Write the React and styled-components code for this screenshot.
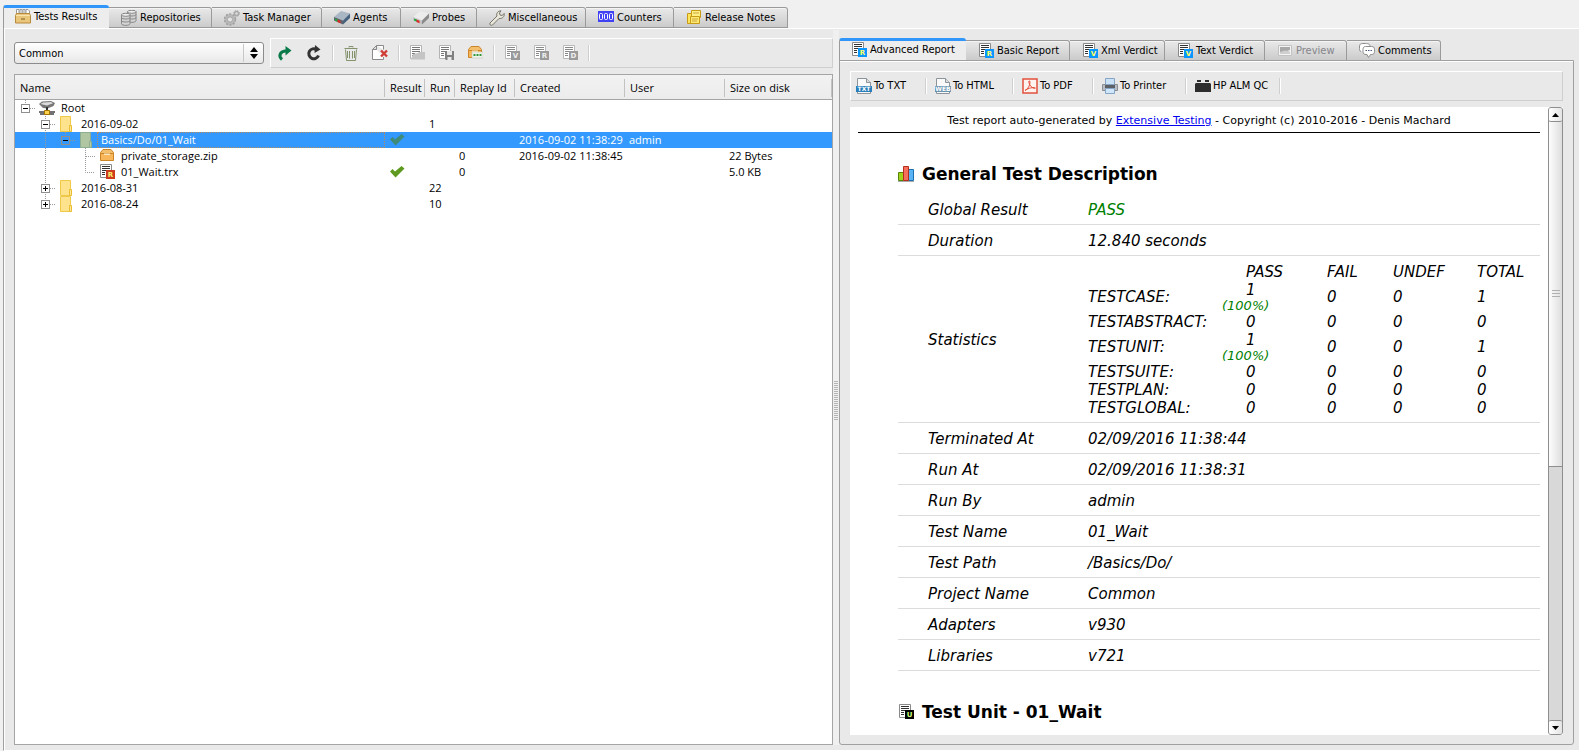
import React from "react";
import styled, { createGlobalStyle, css } from "styled-components";

const uiFont = '"DejaVu Sans Condensed", "DejaVu Sans", sans-serif';
const treeFont = '"Open Sans", "Noto Sans", sans-serif';
const reportFont = '"DejaVu Sans", sans-serif';

const GlobalStyle = createGlobalStyle`
  *, *::before, *::after { box-sizing: border-box; }
  body { margin: 0; background: #f0f0f0; color: #000; font: 11px/16px ${uiFont}; }
  button, select { font: inherit; color: inherit; }
`;

/* ---------- shell ---------- */
const Window = styled.div`
  display: flex;
  flex-direction: column;
  height: 100vh;
  min-height: 480px;
  padding: 5px 0 0 3px;
  overflow: hidden;
  background: #f0f0f0;
`;
const TabList = styled.div`
  display: flex;
  align-items: flex-end;
  height: 23px;
  flex: none;
`;
const Tab = styled.button`
  display: flex;
  align-items: center;
  gap: 3px;
  width: ${(p) => p.$width}px;
  height: 21px;
  flex: none;
  padding: 0 0 0 12px;
  border: 1px solid #9a9a9a;
  border-left-width: 0;
  border-radius: 0 3px 0 0;
  background: linear-gradient(#e9e9e9, #cbcbcb);
  box-shadow: inset 0 1px #f4f4f4;
  white-space: nowrap;
  text-align: left;
  &:disabled { color: #85858b; }
  ${(p) => p.$active && css`
    height: 23px;
    padding-left: 11px;
    padding-bottom: 2px;
    border: 1px solid #9a9a9a;
    border-width: 3px 0 0 1px;
    border-top-color: #3096fa;
    border-radius: 3px 3px 0 0;
    background: #ededed;
    box-shadow: none;
  `}
`;
const Pane = styled.div`
  display: flex;
  flex: 1;
  min-height: 0;
  min-width: 0;
  background: #e9e9e9;
`;
const OuterPane = styled(Pane)`
  border-left: 1px solid #a0a0a0;
  border-bottom: 1px solid #fff;
  box-shadow: inset 1px 1px #fff;
  padding: 10px 5px 5px 10px;
`;
const Left = styled.section`
  display: flex;
  flex-direction: column;
  flex: 819 1 0;
  min-width: 0;
`;
const Right = styled.section`
  display: flex;
  flex-direction: column;
  flex: 735 1 0;
  min-width: 0;
`;
const Splitter = styled.div`
  display: flex;
  align-items: center;
  justify-content: center;
  width: 6px;
  margin-top: -8px;
  padding-top: 26px;
  flex: none;
  background: #f0f0f0;
`;

/* ---------- left side ---------- */
const LeftBar = styled.div`
  display: flex;
  align-items: center;
  gap: 6px;
  height: 30px;
  flex: none;
`;
const Combo = styled.div`
  position: relative;
  width: 250px;
  height: 22px;
  flex: none;
`;
const Select = styled.select`
  appearance: none;
  width: 100%;
  height: 100%;
  padding: 1px 24px 0 4px;
  border: 1px solid #8c8c8c;
  border-radius: 3px;
  background: linear-gradient(#fff, #e8e8e8);
`;
const ComboArrows = styled.span`
  position: absolute;
  right: 1px;
  top: 2px;
  bottom: 2px;
  width: 20px;
  display: flex;
  align-items: center;
  justify-content: center;
  border-left: 1px solid #c8c8c8;
  pointer-events: none;
`;
const ToolBar = styled.div`
  display: flex;
  align-items: center;
  height: 30px;
  flex: 1;
  min-width: 0;
  border: 1px solid #fff;
  border-bottom-color: #cfcfcf;
  border-right-color: #cfcfcf;
`;
const ReportToolBar = styled(ToolBar)`
  flex: none;
`;
const IconButton = styled.button`
  display: flex;
  align-items: center;
  justify-content: center;
  width: 29px;
  height: 24px;
  padding: 0 2px 0 0;
  border: 0;
  background: none;
`;
const Separator = styled.span`
  width: 2px;
  height: 16px;
  margin: 0 3px;
  flex: none;
  border-left: 1px solid #cfcfcf;
  border-right: 1px solid #fff;
`;
const TreeBox = styled.div`
  flex: 1;
  min-height: 0;
  margin-top: 6px;
  overflow: hidden;
  border: 1px solid #a5a5a5;
  background: #fff;
`;
const Tree = styled.table`
  width: 100%;
  table-layout: fixed;
  border-collapse: separate;
  border-spacing: 0;
  font: 11px/16px ${treeFont};
`;
const TreeHead = styled.th`
  position: relative;
  height: 25px;
  padding: 1px 0 0 5px;
  border-bottom: 1px solid #a5a5a5;
  background: linear-gradient(to bottom, #f2f2f2, #ececec);
  font-weight: 400;
  text-align: left;
  white-space: nowrap;
  &::after {
    content: "";
    position: absolute;
    right: 0;
    top: 4px;
    bottom: 2px;
    width: 1px;
    background: #c2c2c2;
  }
`;
const TreeRow = styled.tr`
  height: 16px;
  ${(p) => p.$selected && css`background: #3399ff; color: #fff;`}
`;
const TreeCell = styled.td`
  height: 16px;
  padding: 0 0 0 4px;
  white-space: nowrap;
  overflow: hidden;
`;
const NameCell = styled(TreeCell)`
  padding: 0;
`;
const NameLine = styled.div`
  display: flex;
  height: 16px;
`;
const RowIcon = styled.span`
  flex: none;
  margin: 0 2px 0 4px;
`;
const NameText = styled.span`
  flex: 1;
  padding-left: ${(p) => (p.$focus ? 3 : 4)}px;
  line-height: ${(p) => (p.$focus ? 14 : 16)}px;
  ${(p) => p.$focus && css`border: 1px dotted #b98a5c;`}
`;
const Svg = styled.svg`
  display: block;
  flex: none;
`;

/* ---------- right side ---------- */
const RightPane = styled(Pane)`
  flex-direction: column;
  gap: 6px;
  padding: 10px 10px 9px;
  border: 1px solid #a0a0a0;
  border-radius: 0 0 3px 3px;
  box-shadow: inset 0 1px #fff;
`;
const RightTabs = styled(TabList)`
  margin-bottom: -1px;
`;
const TextButton = styled.button`
  display: flex;
  align-items: center;
  gap: 2px;
  width: ${(p) => p.$width}px;
  height: 24px;
  padding: 0 0 0 5px;
  border: 0;
  background: none;
  white-space: nowrap;
`;
const View = styled.div`
  display: flex;
  flex: 1;
  min-height: 0;
  background: #fff;
`;
const Doc = styled.article`
  flex: 1;
  min-width: 0;
  overflow: hidden;
  padding: 5px 8px 0;
  font: 15px/18px ${reportFont};
`;
const Credits = styled.p`
  margin: 0;
  padding-bottom: 2px;
  border-bottom: 1px solid #000;
  font-size: 11px;
  line-height: 18px;
  text-align: center;
  white-space: nowrap;
  a { color: #0000ee; }
`;
const Heading = styled.h2`
  display: flex;
  align-items: center;
  gap: 8px;
  margin: 29px 0 8px 40px;
  font-size: 17px;
  line-height: 24px;
`;
const Facts = styled.table`
  width: calc(100% - 40px);
  margin-left: 40px;
  border-collapse: separate;
  border-spacing: 0;
  table-layout: fixed;
  font-style: italic;
`;
const FactLabel = styled.th`
  width: 190px;
  padding: 7px 0 5px 30px;
  border-bottom: 1px solid #dcdcdc;
  font-weight: 400;
  text-align: left;
`;
const FactValue = styled.td`
  padding: 7px 0 5px;
  border-bottom: 1px solid #dcdcdc;
  color: ${(p) => (p.$pass ? "#008000" : "#000")};
`;
const Stats = styled.table`
  width: 100%;
  table-layout: fixed;
  border-collapse: separate;
  border-spacing: 0;
  th, td { padding: 0; font-weight: 400; text-align: left; white-space: nowrap; }
`;
const Count = styled.div`
  padding-left: 24px;
`;
const Percent = styled.div`
  color: #008000;
  font-size: 13px;
  line-height: 14px;
`;
const ScrollBar = styled.div`
  display: flex;
  flex-direction: column;
  width: 15px;
  flex: none;
  border: 1px solid #8e8e8e;
  border-radius: 3px;
  background: #d8d8d8;
`;
const ScrollButton = styled.button`
  display: flex;
  align-items: center;
  justify-content: center;
  height: 14px;
  flex: none;
  padding: 0;
  border: 0 solid #8e8e8e;
  border-width: ${(p) => (p.$up ? "0 0 1px" : "1px 0 0")};
  border-radius: 2px;
  background: linear-gradient(to right, #fff, #e4e4e4);
`;
const Thumb = styled.div`
  display: flex;
  align-items: center;
  justify-content: center;
  flex: 345 1 0;
  border-bottom: 1px solid #8e8e8e;
  background: linear-gradient(to right, #fcfcfc, #dedede);
`;
const Trough = styled.div`
  flex: 254 1 0;
`;

/* ---------- icons ---------- */
const Icon = ({ children }) => (
  <Svg width="16" height="16" viewBox="0 0 16 16" aria-hidden="true">{children}</Svg>
);
const Mark = ({ x, y, size = 7, fill, children }) => (
  <text x={x} y={y} fontSize={size} fill={fill} textAnchor="middle" fontWeight="700" fontStyle="normal" fontFamily="DejaVu Sans">{children}</text>
);
const Page = ({ children, line = "#333", edge = "#8a8a8a" }) => (
  <Icon>
    <path d="M1.500 .5h11v13h-11z" fill="#fff" stroke={edge} />
    <path d="M3 2.500h8M3 4.500h8M3 6.500h8M3 8.500h3M3 10.500h3" stroke={line} />
    {children}
  </Icon>
);
const BadgePage = ({ letter, fill = "#0a96ff", color = "#ffff66", line, edge }) => (
  <Page line={line} edge={edge}>
    <rect x="7" y="6" width="9" height="9" fill={fill} />
    <Mark x="11.500" y="13" fill={color}>{letter}</Mark>
  </Page>
);
const Drawer = () => (
  <Icon>
    <path d="M1.500 5V.5h2.500V5M5 5V.5h2V5M8 5V.5h2V5M11 5V.5h2l1.500 1.500v3" fill="#fff" stroke="#9a9a9a" />
    <path d="M1.500 4.500h13l1 2v7.500H.5V6.500z" fill="#eac67a" stroke="#b88a3c" />
    <path d="M1 6.500h14" stroke="#f8e4b0" />
    <path d="M6 10h4" stroke="#7a5a22" />
  </Icon>
);
const Databases = () => (
  <Icon>
    {[[6, 0], [0, 3]].map(([x, y]) => (
      <g key={x} fill="#d4d4d4" stroke="#858585" transform={`translate(${x} ${y})`}>
        <path d="M.5 1.500v9c0 2.500 8.500 2.500 8.500 0v-9z" />
        <path d="M.5 4.500c0 2 8.500 2 8.500 0M.5 7.500c0 2 8.500 2 8.500 0" fill="none" />
        <ellipse cx="4.800" cy="1.800" rx="4.300" ry="1.500" fill="#efefef" />
      </g>
    ))}
  </Icon>
);
const Gears = () => (
  <Icon>
    <circle cx="6" cy="9.500" r="4" fill="none" stroke="#b8b8b8" strokeWidth="3" />
    <circle cx="6" cy="9.500" r="5.500" fill="none" stroke="#a0a0a0" strokeWidth="1.500" strokeDasharray="2 1.500" />
    <circle cx="12.500" cy="3.500" r="2" fill="none" stroke="#a8a8a8" strokeWidth="1.500" />
    <circle cx="12.500" cy="3.500" r="3" fill="none" stroke="#a8a8a8" strokeDasharray="1.200 1.200" />
    <circle cx="6" cy="9.500" r="2.500" fill="#e4e4e4" stroke="#8f8f8f" strokeWidth=".6" />
  </Icon>
);
const Box = ({ top, side, front }) => (
  <Icon>
    <path d="M0 7l7-6 9 2.500-7 7z" fill={top} />
    <path d="M9 10.500l7-7V8l-7 6.500z" fill={side} />
    <path d="M0 7l9 3.500v4L0 10.500z" fill={front} />
    <path d="M1 8.500l3 1.200v2L1 10.500z" fill="#1faa3c" />
    <path d="M3.500 9.500l3 1.200v2.500l-3-1.200z" fill="#e02828" />
  </Icon>
);
const Wrench = () => (
  <Icon>
    <path d="M1 13l7-7c-1-3 1-5 4-5.200L10.500 3l.5 2 2 .5L15.300 3.500c.3 3-2 5.500-5.300 5L3.500 15c-1.500 1-3.500-.5-2.500-2z" fill="#e9e7dc" stroke="#77756c" />
  </Icon>
);
const Digits = () => (
  <Icon>
    <rect y="1" width="16" height="11" fill="#4040f4" />
    {[1.5, 6.5, 11.5].map((x) => <rect key={x} x={x} y="3.500" width="3" height="6" rx="1" fill="none" stroke="#fff" />)}
  </Icon>
);
const Notes = () => (
  <Icon>
    <path d="M1.500 3.500h9v10h-9z" fill="#ffe45c" stroke="#c79b14" />
    <path d="M5.500.5h9v7h-9z" fill="#ffef86" stroke="#c79b14" />
    <path d="M4.500 6.500h9v7h-9z" fill="#ffe972" stroke="#c79b14" />
    <path d="M7 3h6M6 9h6M6 11h5" stroke="#c9a63c" />
  </Icon>
);
const Replay = () => (
  <Icon>
    <path d="M5 14.500C1 11 3 5.500 10 6" fill="none" stroke="#0b7a4a" strokeWidth="3" />
    <path d="M8.500 1l6 4.500-6 5z" fill="#0b7a4a" />
  </Icon>
);
const Reload = () => (
  <Icon>
    <path d="M12.500 10.500A5 5 0 1 1 10.500 4.500" fill="none" stroke="#333" strokeWidth="3" />
    <path d="M9 0l5.500 4.500L8.500 8z" fill="#333" />
  </Icon>
);
const Trash = () => (
  <Icon>
    <path d="M6 2.500v-1h4v1M2.500 4.500l1 11h9l1-11M1.500 3.500h13M6.500 6v7.500M9.500 6v7.500M4.500 6v7M11.500 6v7" fill="none" stroke="#83926c" />
  </Icon>
);
const DeletePage = () => (
  <Icon>
    <path d="M4.500.5h7v4M11.500 12v2.500h-11v-10h4" fill="#fff" stroke="#8a8a8a" />
    <path d="M.5 4.500l4-4v4z" fill="#ddd" stroke="#8a8a8a" />
    <path d="M9 5.500l6 6M15 5.500l-6 6" stroke="#d03b34" strokeWidth="2.400" />
  </Icon>
);
const OpenPage = () => (
  <Page line="#777" edge="#b4b4b4">
    <path d="M4 9l5-1 1-1h6v7.500H2z" fill="#c4c4c4" />
  </Page>
);
const SavePage = () => (
  <Page line="#777" edge="#b4b4b4">
    <path d="M7 6h9v9H8l-1-1z" fill="#808080" />
    <path d="M9 6h5v4H9zM9.500 12h4v3h-4z" fill="#e8e8e8" />
  </Page>
);
const Chest = ({ extra }) => (
  <Icon>
    <path d="M1.500 6.500v-2l2.500-3h8l2.500 3v2z" fill="#f4bf6c" stroke="#cc8526" />
    <path d="M1.500 5.500h13v7h-13z" fill="#f8b75a" stroke="#cc8526" />
    <path d="M5 5.500h6v1.500H5z" fill="#fbe6bd" />
    {extra && <g><rect x="5" y="7" width="11" height="6" fill="#eef4ea" stroke="#bbb" strokeWidth=".5" /><path d="M6.500 10h2M9.500 10h2M12.500 10h2" stroke="#32943c" strokeWidth="2" /></g>}
  </Icon>
);
const FileType = ({ label, blue }) => (
  <Icon>
    <path d="M1.500 15.500V.5h9l4 4v11z" fill="#fafafa" stroke="#8c9399" />
    <path d="M10.500.5v4h4" fill="#ddd" stroke="#8c9399" />
    <rect y="8" width="16" height="6" fill={blue} />
    <Mark x="8" y="13.200" size={6} fill="#fff">{label}</Mark>
  </Icon>
);
const Pdf = () => (
  <Icon>
    <rect x="1" y="1" width="14" height="14" fill="#fff3f0" stroke="#e2503c" strokeWidth="1.500" />
    <path d="M3 12.500c3-1.500 5-5 5-8.500 0-1.500-1.500-1.500-1.200 0 .6 3.500 3 6 6 6.500.8 0 .6-1-.3-1C9 9.500 5.500 10.500 3 12.500z" fill="none" stroke="#e2503c" />
  </Icon>
);
const Printer = () => (
  <Icon>
    <path d="M3.500.5h9v6h-9z" fill="#c9e2f8" stroke="#86a5c4" />
    <path d="M.5 6.500h3v1h9v-1h3v6H.5z" fill="#b9bec4" stroke="#8a8f95" />
    <path d="M3 7h10v3H3z" fill="#5c6167" />
    <path d="M3.500 10.500h9v5h-9z" fill="#cfe6fb" stroke="#86a5c4" />
  </Icon>
);
const Brick = () => (
  <Icon><path d="M1 5h14l1 1v8H0V6zM2 2h4v2H2zM10 2h4v2h-4z" fill="#2d2d2d" /></Icon>
);
const Picture = () => (
  <Icon>
    <path d="M1.500 2.500h13v10h-13z" fill="#f4f4f4" stroke="#c2c2c2" />
    <path d="M3 4h10v3l-6 2H3z" fill="#a8a8a8" />
    <path d="M3 9l5-1.500 5 1V11H3z" fill="#cfcfcf" />
  </Icon>
);
const Bubbles = () => (
  <Icon>
    <path d="M2 8.500C0 8 .5 6 .5 4 .5 1 1.500.5 5 .5s6 0 6 3" fill="#fff" stroke="#8c8c8c" />
    <path d="M6.500 3.500h6c2 0 3 1 3 3v2c0 2-1 3-3 3h-1l-2 3-1.500-3H7c-2 0-3-1-3-3v-2c0-2 1-3 2.500-3z" fill="#fff" stroke="#8c8c8c" />
    <path d="M6.500 7.500h1.500M9 7.500h1.500M11.500 7.500h1.500" stroke="#46597c" />
  </Icon>
);
const RootIcon = () => (
  <Icon>
    <path d="M0 4l3-2.500L12 1l4 2-1.500 3-6 2.500L4 8z" fill="#777" />
    <path d="M1.500 4L4 2.500l8-.5 2 1.200L8 5.500z" fill="#ddd" />
    <path d="M8 7v4" stroke="#333" strokeWidth="2" />
    <path d="M0 12h16M1 14h14" stroke="#444" strokeWidth="1.500" />
    <path d="M5.500 10.500h5v4h-5z" fill="#ffd34a" stroke="#a87400" />
  </Icon>
);
const Folder = ({ selected }) => (
  <Icon>
    <path d="M1.500.5h10v15h-10z" fill={selected ? "#b0c5a2" : "#ffe38c"} stroke={selected ? "#8eae91" : "#efc94c"} />
    <path d="M10.500 9.500h2v6h-2z" fill={selected ? "#b6cba0" : "#ffe79c"} stroke={selected ? "#8eae91" : "#e9bd32"} />
  </Icon>
);
const Check = ({ selected }) => (
  <Icon><path d="M1 7.500L3.500 5 6 7.500 12.500 2 15.500 4.500 6.500 13.500z" fill={selected ? "#3f8a78" : "#5f9a20"} /></Icon>
);
const Bars = () => (
  <Icon>
    <path d="M.5 6.500h5v8h-5z" fill="#a2d21c" stroke="#55860c" />
    <path d="M10.500 3.500h5v11h-5z" fill="#58b4f4" stroke="#1c70b0" />
    <path d="M5.500.5h5v14h-5z" fill="#f4705c" stroke="#b42c1c" />
    <path d="M0 15.500h16" stroke="#aaa" />
  </Icon>
);
const Branch = ({ d, box }) => (
  <Svg width="20" height="16" viewBox="0 0 20 16" aria-hidden="true">
    {d && <path d={d} fill="none" stroke="#999" strokeDasharray="1 1" />}
    {box && <g><rect x="6.500" y="4.500" width="8" height="8" fill={box === "sel" ? "none" : "#fff"} stroke="#8f8f8f" /><path d={box === "+" ? "M8 8.500h5M10.500 6v5" : "M8 8.500h5"} stroke="#000" /></g>}
  </Svg>
);

/* ---------- content ---------- */
const mainTabs = [
  ["Tests Results", 106, <Drawer />], ["Repositories", 103, <Databases />], ["Task Manager", 110, <Gears />],
  ["Agents", 79, <Box top="#a9b6c4" side="#47627e" front="#5d646c" />], ["Probes", 76, <Box top="#ececec" side="#8a8a8a" front="#c4c4c4" />],
  ["Miscellaneous", 109, <Wrench />], ["Counters", 88, <Digits />], ["Release Notes", 114, <Notes />],
];
const reportTabs = [
  ["Advanced Report", 127, <BadgePage letter="R" />], ["Basic Report", 104, <BadgePage letter="R" />],
  ["Xml Verdict", 95, <BadgePage letter="V" />], ["Text Verdict", 100, <BadgePage letter="V" />],
  ["Preview", 82, <Picture />, true], ["Comments", 94, <Bubbles />],
];
const gray = { line: "#888", edge: "#b8b8b8", fill: "#9a9a9a", color: "#eee" };
const tools = [
  ["Replay", <Replay />], ["Refresh", <Reload />], null, ["Empty", <Trash />], ["Delete", <DeletePage />], null,
  ["Open", <OpenPage />], ["Save", <SavePage />], ["Export", <Chest extra />], null,
  ["Verdict", <BadgePage letter="V" {...gray} />], ["Report", <BadgePage letter="R" {...gray} />], ["Design", <BadgePage letter="D" {...gray} />], null,
];
const exportsTo = [
  ["To TXT", 71, <FileType label="TXT" blue="#2a7fba" />], ["To HTML", 79, <FileType label="WEB" blue="#6a93b0" />],
  ["To PDF", 72, <Pdf />], ["To Printer", 85, <Printer />], ["HP ALM QC", 86, <Brick />],
];
const columns = [["Name", 370], ["Result", 40], ["Run", 30], ["Replay Id", 60], ["Created", 110], ["User", 100], ["Size on disk", 0]];
const V = "M10.500 0v16";
const VH = "M10.500 0v16M15 8.500h5";
const rows = [
  { name: "Root", lines: [{ box: "-", d: "M10.500 0v4M15 8.500h5" }], icon: <RootIcon /> },
  { name: "2016-09-02", lines: [{}, { box: "-", d: VH }], icon: <Folder />, run: "1" },
  { name: "Basics/Do/01_Wait", lines: [{}, { d: V }, { box: "sel", d: "M10.500 0v4M15 8.500h5" }], icon: <Folder selected />, pass: true, selected: true, created: "2016-09-02 11:38:29", user: "admin" },
  { name: "private_storage.zip", lines: [{}, { d: V }, {}, { d: "M10.500 0v16M11 8.500h9" }], icon: <Chest />, replay: "0", created: "2016-09-02 11:38:45", size: "22 Bytes" },
  { name: "01_Wait.trx", lines: [{}, { d: V }, {}, { d: "M10.500 0v8.500h9" }], icon: <BadgePage letter="R" fill="#cc3c1c" color="#f8f46c" />, pass: true, replay: "0", size: "5.0 KB" },
  { name: "2016-08-31", lines: [{}, { box: "+", d: VH }], icon: <Folder />, run: "22" },
  { name: "2016-08-24", lines: [{}, { box: "+", d: "M10.500 0v8M15 8.500h5" }], icon: <Folder />, run: "10" },
];
const stats = [
  ["TESTCASE:", 1, 1], ["TESTABSTRACT:", 0, 0], ["TESTUNIT:", 1, 1], ["TESTSUITE:", 0, 0], ["TESTPLAN:", 0, 0], ["TESTGLOBAL:", 0, 0],
];
const facts = [
  ["Terminated At", "02/09/2016 11:38:44"], ["Run At", "02/09/2016 11:38:31"], ["Run By", "admin"], ["Test Name", "01_Wait"],
  ["Test Path", "/Basics/Do/"], ["Project Name", "Common"], ["Adapters", "v930"], ["Libraries", "v721"],
];

const Tabs = ({ items, as: List = TabList }) => (
  <List role="tablist">
    {items.map(([label, width, icon, disabled], i) => (
      <Tab key={label} role="tab" aria-selected={i === 0} $active={i === 0} $width={width} disabled={disabled}>{icon}{label}</Tab>
    ))}
  </List>
);

const ResultsTree = () => (
  <TreeBox>
    <Tree>
      <colgroup>{columns.map(([n, w]) => <col key={n} width={w || undefined} />)}</colgroup>
      <thead><tr>{columns.map(([n]) => <TreeHead key={n} scope="col">{n}</TreeHead>)}</tr></thead>
      <tbody>
        {rows.map((r) => (
          <TreeRow key={r.name} $selected={r.selected}>
            <NameCell>
              <NameLine>
                {r.lines.map((l, i) => <Branch key={i} {...l} />)}
                <RowIcon>{r.icon}</RowIcon>
                <NameText $focus={r.selected}>{r.name}</NameText>
              </NameLine>
            </NameCell>
            <TreeCell>{r.pass && <Check selected={r.selected} />}</TreeCell>
            <TreeCell>{r.run}</TreeCell>
            <TreeCell>{r.replay}</TreeCell>
            <TreeCell>{r.created}</TreeCell>
            <TreeCell>{r.user}</TreeCell>
            <TreeCell>{r.size}</TreeCell>
          </TreeRow>
        ))}
      </tbody>
    </Tree>
  </TreeBox>
);

const Statistics = () => (
  <Stats>
    <colgroup><col width="134" /><col width="105" /><col width="66" /><col width="84" /><col /></colgroup>
    <thead>
      <tr><td /><th scope="col"><Count>PASS</Count></th><th scope="col">FAIL</th><th scope="col">UNDEF</th><th scope="col">TOTAL</th></tr>
    </thead>
    <tbody>
      {stats.map(([label, pass, total]) => (
        <tr key={label}>
          <th scope="row">{label}</th>
          <td><Count>{pass}</Count>{pass > 0 && <Percent>(100%)</Percent>}</td>
          <td>0</td><td>0</td><td>{total}</td>
        </tr>
      ))}
    </tbody>
  </Stats>
);

const Report = () => (
  <Doc>
    <Credits>Test report auto-generated by <a href="#extensive-testing">Extensive Testing</a> - Copyright (c) 2010-2016 - Denis Machard</Credits>
    <Heading><Bars />General Test Description</Heading>
    <Facts>
      <tbody>
        <tr><FactLabel scope="row">Global Result</FactLabel><FactValue $pass>PASS</FactValue></tr>
        <tr><FactLabel scope="row">Duration</FactLabel><FactValue>12.840 seconds</FactValue></tr>
        <tr><FactLabel scope="row">Statistics</FactLabel><FactValue><Statistics /></FactValue></tr>
        {facts.map(([k, v]) => <tr key={k}><FactLabel scope="row">{k}</FactLabel><FactValue>{v}</FactValue></tr>)}
      </tbody>
    </Facts>
    <Heading><BadgePage letter="U" fill="#000" color="#cf7" />Test Unit - 01_Wait</Heading>
  </Doc>
);

const Arrow = ({ down }) => (
  <Svg width="7" height="4" viewBox="0 0 7 4" aria-hidden="true"><path d={down ? "M0 0h7L3.500 4z" : "M0 4h7L3.500 0z"} /></Svg>
);

export default function App() {
  return (
    <Window>
      <GlobalStyle />
      <Tabs items={mainTabs} />
      <OuterPane>
        <Left>
          <LeftBar>
            <Combo>
              <Select aria-label="Project" defaultValue="Common"><option>Common</option></Select>
              <ComboArrows>
                <Svg width="8" height="12" viewBox="0 0 8 12" aria-hidden="true"><path d="M0 5h8L4 0zM0 7h8L4 12z" /></Svg>
              </ComboArrows>
            </Combo>
            <ToolBar role="toolbar">
              {tools.map((t, i) => (t ? <IconButton key={i} aria-label={t[0]}>{t[1]}</IconButton> : <Separator key={i} />))}
            </ToolBar>
          </LeftBar>
          <ResultsTree />
        </Left>
        <Splitter>
          <Svg width="6" height="40" viewBox="0 0 6 40" aria-hidden="true">
            <path d="M3 0v40" stroke="#b4b4b4" strokeWidth="4" strokeDasharray="1 1" />
          </Svg>
        </Splitter>
        <Right>
          <Tabs items={reportTabs} as={RightTabs} />
          <RightPane>
            <ReportToolBar role="toolbar">
              {exportsTo.map(([label, width, icon]) => (
                <React.Fragment key={label}><TextButton $width={width}>{icon}{label}</TextButton><Separator /></React.Fragment>
              ))}
            </ReportToolBar>
            <View>
              <Report />
              <ScrollBar aria-hidden="true">
                <ScrollButton tabIndex={-1} $up><Arrow /></ScrollButton>
                <Thumb>
                  <Svg width="8" height="8" viewBox="0 0 8 8"><path d="M0 .5h8M0 3.500h8M0 6.500h8" stroke="#b0b0b0" /></Svg>
                </Thumb>
                <Trough />
                <ScrollButton tabIndex={-1}><Arrow down /></ScrollButton>
              </ScrollBar>
            </View>
          </RightPane>
        </Right>
      </OuterPane>
    </Window>
  );
}
